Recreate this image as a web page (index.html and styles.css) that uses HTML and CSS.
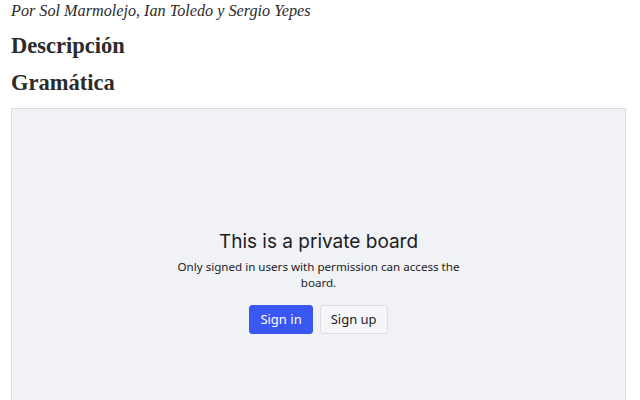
FILE: index.html
```html
<!DOCTYPE html>
<html>
<head>
  <meta charset="UTF-8">
  <title>Gramática</title>
  <link rel="stylesheet" href="styles.css">
</head>
<body>
  <div id="article">
    <p class="byline">Por Sol Marmolejo, Ian Toledo y Sergio Yepes</p>
    <h2>Descripción</h2>
    <h2>Gramática</h2>

    <div class="board">
      <div class="board-lock">
        <h3>This is a private board</h3>
        <p>Only signed in users with permission can access the board.</p>
        <div class="board-actions">
          <button class="btn btn-primary">Sign in</button>
          <button class="btn btn-secondary">Sign up</button>
        </div>
      </div>
    </div>
  </div>
</body>
</html>
```

FILE: styles.css
```css
body {
  margin: 0;
  padding: 0 14px 0 11px;
  font-family: "Liberation Serif", serif;
  color: #2b2b2b;
}
.byline {
  margin: 0;
  padding-top: 1px;
  font-size: 16.2px;
  font-style: italic;
  line-height: 20px;
}
h2 {
  margin: 13px 0 0;
  font-size: 22.5px;
  line-height: 24px;
}
.board {
  margin-top: 13px;
  height: 344px;
  background-color: #f1f2f6;
  border: 1px solid #dcdde3;
  display: flex;
  align-items: center;
  justify-content: center;
}
.board-lock {
  max-width: 300px;
  text-align: center;
}
.board-lock h3 {
  margin: 0;
  font-family: Inter, sans-serif;
  font-weight: 400;
  font-size: 19px;
  line-height: 26px;
  color: #1c1c1e;
}
.board-lock p {
  margin: 4px 0 0;
  font-family: "Noto Sans", sans-serif;
  font-size: 11.6px;
  line-height: 16px;
  color: #1c1c1e;
}
.board-actions {
  margin-top: 14px;
  display: flex;
  justify-content: center;
  gap: 7px;
}
.btn {
  height: 29px;
  padding: 0 10px;
  font-family: "Noto Sans", sans-serif;
  font-size: 13px;
  border-radius: 3px;
  cursor: pointer;
}
.btn-primary {
  background-color: #3a57f4;
  color: #fff;
  border: 1px solid #3a57f4;
}
.btn-secondary {
  background-color: #f6f6f8;
  color: #1c1c1e;
  border: 1px solid #dcdde3;
}
```
